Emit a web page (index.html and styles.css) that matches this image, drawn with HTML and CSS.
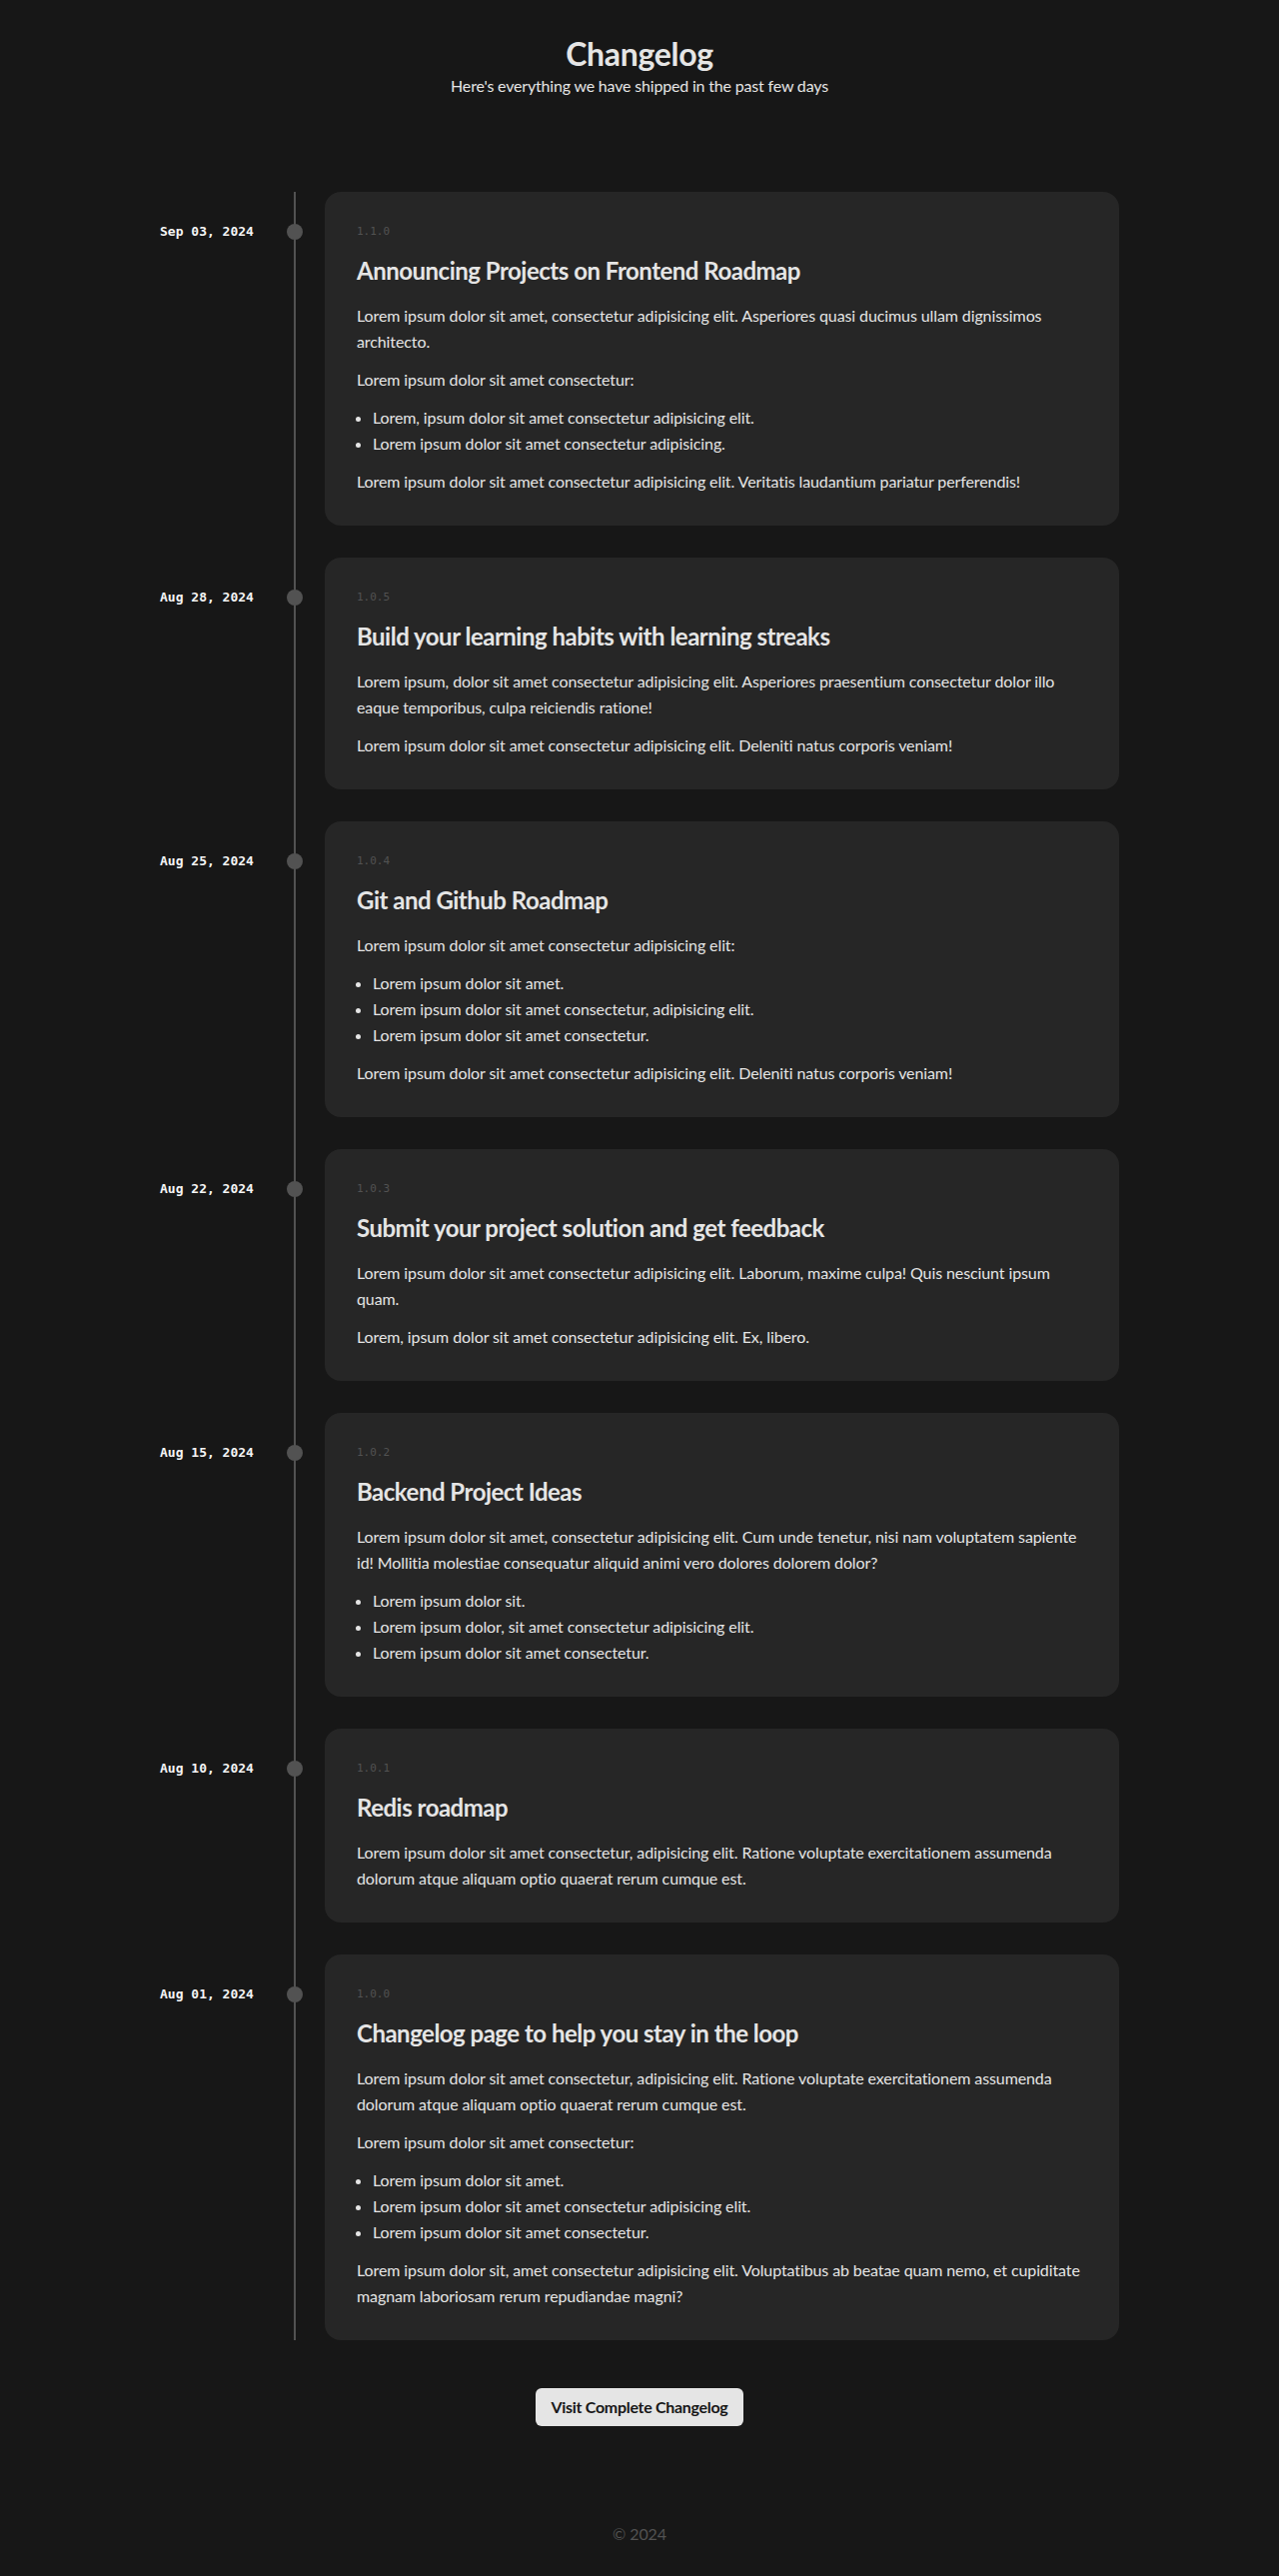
FILE: index.html
```html
<!DOCTYPE html>
<html lang="en">
<head>
<meta charset="utf-8">
<title>Changelog</title>
<link rel="stylesheet" href="styles.css">
</head>
<body>
<header class="page-header">
  <h1 class="page-title">Changelog</h1>
  <p class="page-subtitle">Here's everything we have shipped in the past few days</p>
</header>

<main class="timeline">
  <section class="entry">
    <div class="entry-date">Sep 03, 2024</div>
    <div class="rail"><span class="dot"></span></div>
    <article class="card">
      <div class="version">1.1.0</div>
      <h2 class="card-title">Announcing Projects on Frontend Roadmap</h2>
      <div class="card-body">
        <p>Lorem ipsum dolor sit amet, consectetur adipisicing elit. Asperiores quasi ducimus ullam dignissimos architecto.</p>
        <p>Lorem ipsum dolor sit amet consectetur:</p>
        <ul>
          <li>Lorem, ipsum dolor sit amet consectetur adipisicing elit.</li>
          <li>Lorem ipsum dolor sit amet consectetur adipisicing.</li>
        </ul>
        <p>Lorem ipsum dolor sit amet consectetur adipisicing elit. Veritatis laudantium pariatur perferendis!</p>
      </div>
    </article>
  </section>

  <section class="entry">
    <div class="entry-date">Aug 28, 2024</div>
    <div class="rail"><span class="dot"></span></div>
    <article class="card">
      <div class="version">1.0.5</div>
      <h2 class="card-title">Build your learning habits with learning streaks</h2>
      <div class="card-body">
        <p>Lorem ipsum, dolor sit amet consectetur adipisicing elit. Asperiores praesentium consectetur dolor illo eaque temporibus, culpa reiciendis ratione!</p>
        <p>Lorem ipsum dolor sit amet consectetur adipisicing elit. Deleniti natus corporis veniam!</p>
      </div>
    </article>
  </section>

  <section class="entry">
    <div class="entry-date">Aug 25, 2024</div>
    <div class="rail"><span class="dot"></span></div>
    <article class="card">
      <div class="version">1.0.4</div>
      <h2 class="card-title">Git and Github Roadmap</h2>
      <div class="card-body">
        <p>Lorem ipsum dolor sit amet consectetur adipisicing elit:</p>
        <ul>
          <li>Lorem ipsum dolor sit amet.</li>
          <li>Lorem ipsum dolor sit amet consectetur, adipisicing elit.</li>
          <li>Lorem ipsum dolor sit amet consectetur.</li>
        </ul>
        <p>Lorem ipsum dolor sit amet consectetur adipisicing elit. Deleniti natus corporis veniam!</p>
      </div>
    </article>
  </section>

  <section class="entry">
    <div class="entry-date">Aug 22, 2024</div>
    <div class="rail"><span class="dot"></span></div>
    <article class="card">
      <div class="version">1.0.3</div>
      <h2 class="card-title">Submit your project solution and get feedback</h2>
      <div class="card-body">
        <p>Lorem ipsum dolor sit amet consectetur adipisicing elit. Laborum, maxime culpa! Quis nesciunt ipsum quam.</p>
        <p>Lorem, ipsum dolor sit amet consectetur adipisicing elit. Ex, libero.</p>
      </div>
    </article>
  </section>

  <section class="entry">
    <div class="entry-date">Aug 15, 2024</div>
    <div class="rail"><span class="dot"></span></div>
    <article class="card">
      <div class="version">1.0.2</div>
      <h2 class="card-title">Backend Project Ideas</h2>
      <div class="card-body">
        <p>Lorem ipsum dolor sit amet, consectetur adipisicing elit. Cum unde tenetur, nisi nam voluptatem sapiente id! Mollitia molestiae consequatur aliquid animi vero dolores dolorem dolor?</p>
        <ul>
          <li>Lorem ipsum dolor sit.</li>
          <li>Lorem ipsum dolor, sit amet consectetur adipisicing elit.</li>
          <li>Lorem ipsum dolor sit amet consectetur.</li>
        </ul>
      </div>
    </article>
  </section>

  <section class="entry">
    <div class="entry-date">Aug 10, 2024</div>
    <div class="rail"><span class="dot"></span></div>
    <article class="card">
      <div class="version">1.0.1</div>
      <h2 class="card-title">Redis roadmap</h2>
      <div class="card-body">
        <p>Lorem ipsum dolor sit amet consectetur, adipisicing elit. Ratione voluptate exercitationem assumenda dolorum atque aliquam optio quaerat rerum cumque est.</p>
      </div>
    </article>
  </section>

  <section class="entry">
    <div class="entry-date">Aug 01, 2024</div>
    <div class="rail"><span class="dot"></span></div>
    <article class="card">
      <div class="version">1.0.0</div>
      <h2 class="card-title">Changelog page to help you stay in the loop</h2>
      <div class="card-body">
        <p>Lorem ipsum dolor sit amet consectetur, adipisicing elit. Ratione voluptate exercitationem assumenda dolorum atque aliquam optio quaerat rerum cumque est.</p>
        <p>Lorem ipsum dolor sit amet consectetur:</p>
        <ul>
          <li>Lorem ipsum dolor sit amet.</li>
          <li>Lorem ipsum dolor sit amet consectetur adipisicing elit.</li>
          <li>Lorem ipsum dolor sit amet consectetur.</li>
        </ul>
        <p>Lorem ipsum dolor sit, amet consectetur adipisicing elit. Voluptatibus ab beatae quam nemo, et cupiditate magnam laboriosam rerum repudiandae magni?</p>
      </div>
    </article>
  </section>
</main>

<div class="cta-wrap">
  <a class="cta" href="#">Visit Complete Changelog</a>
</div>

<footer class="page-footer">© 2024</footer>
</body>
</html>
```

FILE: styles.css
```css
* { box-sizing: border-box; }

html, body {
  margin: 0;
  padding: 0;
  background: #171717;
}

body {
  font-family: Lato, "Liberation Sans", sans-serif;
  color: #e5e5e5;
  font-size: 16px;
  line-height: 26px;
  letter-spacing: -0.1px;
}

.page-header {
  padding-top: 34px;
  text-align: center;
}

.page-title {
  margin: 0;
  font-size: 32px;
  line-height: 40px;
  font-weight: 700;
  letter-spacing: -0.3px;
  color: #e5e5e5;
}

.page-subtitle {
  margin: 0;
  font-size: 16px;
  line-height: 24px;
  letter-spacing: -0.18px;
  color: #e5e5e5;
}

.timeline {
  width: 960px;
  margin: 94px auto 0;
}

.entry {
  display: flex;
  align-items: stretch;
}

.entry-date {
  width: 134px;
  flex: none;
  padding-top: 30px;
  font-family: "DejaVu Sans Mono", "Liberation Mono", monospace;
  font-size: 13px;
  line-height: 20px;
  font-weight: 600;
  letter-spacing: 0;
  color: #f5f5f5;
}

.rail {
  position: relative;
  width: 2px;
  flex: none;
  background: #525252;
  margin-right: 29px;
}

.dot {
  position: absolute;
  left: -7px;
  top: 32px;
  width: 16px;
  height: 16px;
  border-radius: 50%;
  background: #525252;
}

.card {
  flex: 1;
  min-width: 0;
  background: #262626;
  border-radius: 16px;
  padding: 32px 32px 31px;
  margin-bottom: 32px;
}

.entry:last-child .card {
  margin-bottom: 0;
}

.version {
  font-family: "DejaVu Sans Mono", "Liberation Mono", monospace;
  font-size: 11px;
  line-height: 16px;
  letter-spacing: 0;
  color: #525252;
  margin-bottom: 15px;
}

.card-title {
  margin: 0 0 16px;
  font-size: 24px;
  line-height: 32px;
  font-weight: 700;
  letter-spacing: -0.5px;
  color: #e5e5e5;
}

.card-body p,
.card-body ul {
  margin: 0 0 12px;
}

.card-body > :last-child {
  margin-bottom: 0;
}

.card-body ul {
  padding-left: 16px;
  list-style: disc;
}

.cta-wrap {
  display: flex;
  justify-content: center;
  margin-top: 48px;
}

.cta {
  display: inline-block;
  background: #e5e5e5;
  color: #171717;
  font-size: 16px;
  line-height: 24px;
  font-weight: 700;
  letter-spacing: -0.3px;
  padding: 7px 16px;
  border-radius: 6px;
  text-decoration: none;
}

.page-footer {
  margin-top: 96px;
  text-align: center;
  font-size: 16px;
  line-height: 24px;
  color: #525252;
  padding-bottom: 30px;
}
```
